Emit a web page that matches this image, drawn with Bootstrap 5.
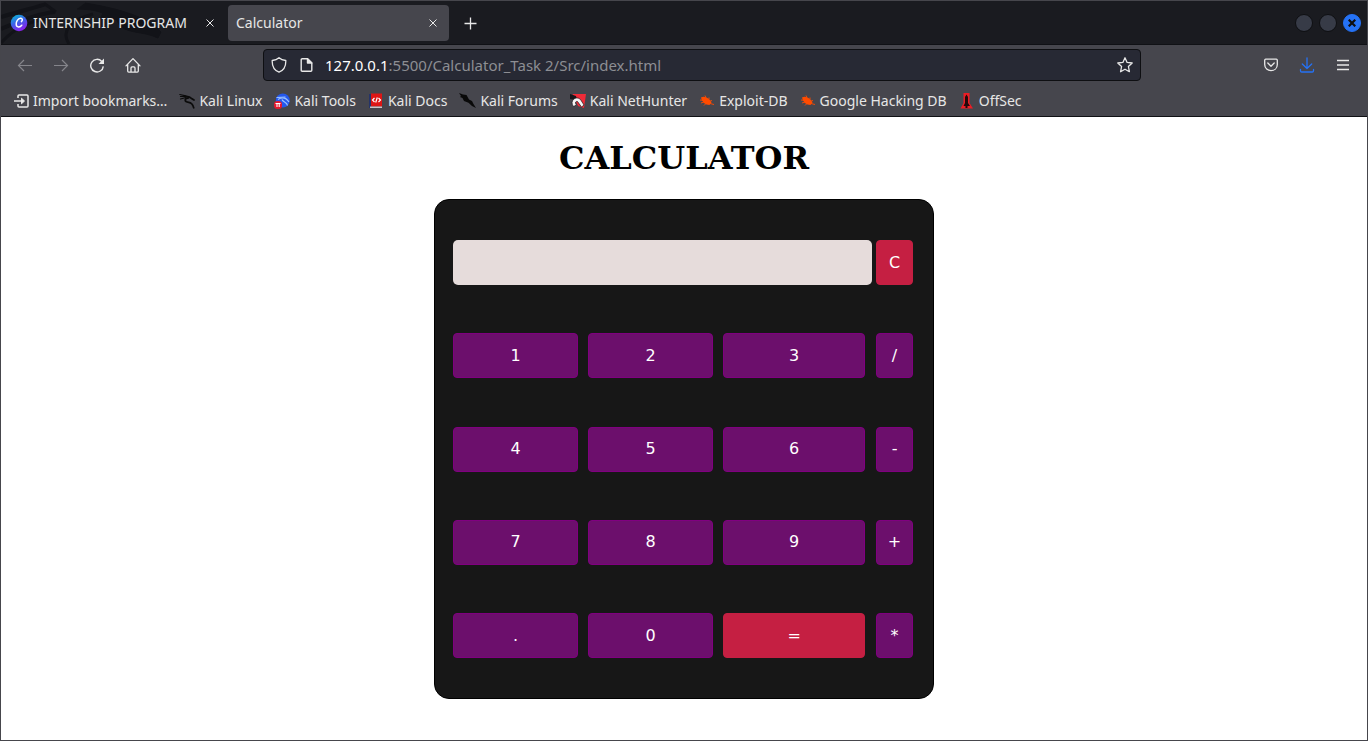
<!DOCTYPE html>
<html lang="en">
<head>
<meta charset="utf-8">
<meta name="viewport" content="width=device-width, initial-scale=1">
<title>Calculator</title>
<link href="https://cdn.jsdelivr.net/npm/bootstrap@5.3.0/dist/css/bootstrap.min.css" rel="stylesheet">
<style>
  body { font-family: "Noto Sans", sans-serif; font-size: 14px; line-height: 20px; }
  .browser { border: 1px solid #46464c; background: #46464d; color: #e6e6e6; }
  .browser svg { display: block; flex: none; }
  .titlebar { position: relative; height: 44px; background: #1a1b20; border-bottom: 1px solid #101115; }
  .dragon { position: absolute; left: 0; top: 0; }
  .icon-btn { border: 0; padding: 0; background: transparent; color: #e8e8e8; display: flex; align-items: center; justify-content: center; }
  .icon-btn:disabled { color: #85858b; }
  .tab { position: relative; width: 221px; height: 36px; padding: 1px 8px 0; border-radius: 4px; color: #e6e6e6; margin-right: 6px; }
  .tab-active { background: #46464d; }
  .tab .icon-btn { width: 16px; height: 16px; }
  .tab-first { padding-right: 4px; }
  .win { width: 18px; height: 18px; border-radius: 50%; background: #373b47; border: 1px solid #0e0f12; }
  .win-group { gap: 6px; margin-right: 6px; }
  .win-close { background: #2572f5; border-color: #2572f5; color: #0e0f12; }
  .toolbar { height: 40px; padding: 0 6px; }
  .tool { width: 36px; height: 32px; }
  .urlbar { flex: 0 1 878px; min-width: 0; height: 32px; margin-left: 36px; background: #272934; border: 1px solid #0e0f12; border-radius: 4px; padding: 0 7px; gap: 11px; }
  .url { color: #8d8e93; text-decoration: none; font-size: 15px; white-space: nowrap; overflow: hidden; }
  .url span { color: #fff; }
  .side { flex: 1 1 0; }
  .bookmarks { height: 32px; padding: 0 12px; gap: 12px; border-bottom: 1px solid #101115; }
  .bookmarks a { color: #e6e6e6; text-decoration: none; display: flex; align-items: center; gap: 4px; white-space: nowrap; }
  .page { background: #fff; color: #000; padding: 21px 16px 41px; }
  .page h1 { font: bold 32px/40px "DejaVu Serif", serif; margin-bottom: 21px; }
  .calculator { width: 500px; max-width: 100%; min-height: 500px; padding: 40px 20px 40px 18px; background: #171717; border: 1px solid #000; border-radius: 15px; }
  .keys { gap: 10px; }
  .keys-top { gap: 4px; }
  .key { flex: 125 1 0; height: 45px; border: 1px solid #800080; border-radius: 4px; background: #6c0f6c; color: #fff; font: 16px/24px "DejaVu Sans", sans-serif; padding: 0; }
  .key-wide { flex-grow: 142; margin-right: 1px; }
  .key-op { flex: 0 0 37px; }
  .key-red { background: #c51f42; border-color: #c51f42; }
  .display-box { flex: 1; min-width: 0; height: 45px; border: 0; border-radius: 5px; background: #e6dcdb; padding: 0 12px; font: 16px/24px "DejaVu Sans", sans-serif; }
</style>
</head>
<body>
<div class="browser min-vh-100 d-flex flex-column">
  <header>
    <div class="titlebar d-flex align-items-center">
      <svg class="dragon" width="170" height="43" viewBox="0 0 170 43" fill="none" stroke="#121318" aria-hidden="true">
        <path d="M0 16C20 10 40 5 45 3M0 28C25 17 42 12 54 11" stroke-width="4"/>
        <path d="M44 3l11 8M68 43c-8-12 0-24 24-30M0 42c14-16 34-26 62-24" stroke-width="3"/>
        <path d="M84 2c36 6 62 14 76 29l-3 6c-15-7-28-4-38-12l-4-7-7 3-1-6-8 3 3-6c-8-3-16-4-26-4" fill="#121318" stroke-width="1"/>
      </svg>
      <div class="tab tab-first d-flex align-items-center">
        <svg class="me-1" width="20" height="18" viewBox="0 0 20 18" aria-hidden="true">
          <defs><linearGradient id="canva" x1="0" y1="0" x2="0.5" y2="1"><stop offset="0" stop-color="#00c8d2"/><stop offset=".5" stop-color="#3a65e8"/><stop offset="1" stop-color="#8a22ee"/></linearGradient></defs>
          <circle cx="10" cy="9" r="8.3" fill="url(#canva)"/>
          <path d="M12.4 7.6c1.600-1.400 1.100-3.500-.9-3.300-2.600.3-4.500 3.400-4.300 6 .2 3.500 4 3.500 5.600.9" fill="none" stroke="#fff" stroke-width="1.500" stroke-linecap="round"/>
        </svg>
        <span class="flex-grow-1 text-nowrap">INTERNSHIP PROGRAM</span>
        <button class="icon-btn" aria-label="Close tab"><svg width="8" height="8" viewBox="0 0 8 8" stroke="currentColor" stroke-width="1"><path d="M.5.5l7 7M7.500.5l-7 7"/></svg></button>
      </div>
      <div class="tab tab-active d-flex align-items-center">
        <span class="flex-grow-1">Calculator</span>
        <button class="icon-btn" aria-label="Close tab"><svg width="8" height="8" viewBox="0 0 8 8" stroke="currentColor" stroke-width="1"><path d="M.5.5l7 7M7.500.5l-7 7"/></svg></button>
      </div>
      <button class="icon-btn ms-2" aria-label="New tab"><svg width="14" height="14" viewBox="0 0 14 14" stroke="currentColor" stroke-width="1.300"><path d="M7.500 1.500v12M1.500 7.500h12"/></svg></button>
      <div class="win-group ms-auto d-flex">
        <button class="icon-btn win" aria-label="Minimize"></button>
        <button class="icon-btn win" aria-label="Maximize"></button>
        <button class="icon-btn win win-close" aria-label="Close"><svg width="8" height="8" viewBox="0 0 8 8" stroke="currentColor" stroke-width="2.200"><path d="M.7.700l6.600 6.600M7.300.700L.7 7.300"/></svg></button>
      </div>
    </div>
    <nav class="toolbar d-flex align-items-center">
      <div class="side d-flex">
        <button class="icon-btn tool" disabled aria-label="Back"><svg width="16" height="16" viewBox="0 0 16 16" fill="none" stroke="currentColor" stroke-width="1.200"><path d="M15 8.500H1.500M7 3L1.500 8.500 7 14"/></svg></button>
        <button class="icon-btn tool" disabled aria-label="Forward"><svg width="16" height="16" viewBox="0 0 16 16" fill="none" stroke="currentColor" stroke-width="1.200"><path d="M1 8.500h13.500M9 3L14.500 8.500 9 14"/></svg></button>
        <button class="icon-btn tool" aria-label="Reload"><svg width="16" height="16" viewBox="0 0 16 16" fill="none" stroke="currentColor" stroke-width="1.400"><path d="M12.800 4.500A6.300 6.300 0 1 0 14.300 9.300"/><path d="M15 1.500V7H9.500z" fill="currentColor" stroke="none"/></svg></button>
        <button class="icon-btn tool" aria-label="Home"><svg width="16" height="16" viewBox="0 0 16 16" fill="none" stroke="currentColor" stroke-width="1.300" stroke-linejoin="round" stroke-linecap="round"><path d="M1 8.900L8 1.600l7 7.300M2.700 7.400v6.700q0 1 1 1h8.600q1 0 1-1V7.400M6 14.900v-4q0-1 1-1h2q1 0 1 1v4"/></svg></button>
      </div>
      <div class="urlbar d-flex align-items-center">
        <svg width="16" height="16" viewBox="0 0 16 16" fill="none" stroke="#e8e8e8" stroke-width="1.300" stroke-linejoin="round" aria-hidden="true"><path d="M8 .8C6.300 2.300 3.800 3.200 1.200 3.500 1 9 3.500 13.500 8 15.200c4.500-1.700 7-6.200 6.800-11.700C12.200 3.200 9.700 2.300 8 .8z"/></svg>
        <svg width="16" height="16" viewBox="0 0 16 16" fill="none" stroke="#e8e8e8" stroke-width="1.400" stroke-linejoin="round" aria-hidden="true"><path d="M4.200 1.700h5.300l4.300 4.300v7.300q0 1-1 1H4.200q-1 0-1-1V2.700q0-1 1-1z"/><path d="M9.500 1.700V6h4.300z" fill="#e8e8e8"/></svg>
        <a class="url flex-grow-1" href="#"><span>127.0.0.1</span>:5500/Calculator_Task 2/Src/index.html</a>
        <button class="icon-btn" aria-label="Bookmark this page"><svg width="16" height="16" viewBox="0 0 16 16" fill="none" stroke="currentColor" stroke-width="1.300" stroke-linejoin="round"><path d="M8 .8l2.100 4.600 5.100.6-3.800 3.500 1 5.200L8 12.200l-4.400 2.500 1-5.200L.8 6l5.100-.6z"/></svg></button>
      </div>
      <div class="side d-flex justify-content-end">
        <button class="icon-btn tool" aria-label="Save to Pocket"><svg width="14" height="14" viewBox="0 0 14 14" fill="none" stroke="currentColor" stroke-width="1.300" stroke-linecap="round" stroke-linejoin="round"><path d="M1.700 1.200h10.600q1 0 1 1V6.500c0 8.200-12.600 8.200-12.600 0V2.200q0-1 1-1z"/><path d="M3.800 5L7 8.200 10.200 5"/></svg></button>
        <button class="icon-btn tool" aria-label="Downloads"><svg width="16" height="16" viewBox="0 0 16 16" fill="none" stroke="#2572f5" stroke-width="1.300" stroke-linecap="round" stroke-linejoin="round"><path d="M8 .8v10.700M3.300 7L8 11.500 12.700 7M1.500 12.500v1.300q0 1.200 1.200 1.200h10.600q1.200 0 1.200-1.200v-1.300"/></svg></button>
        <button class="icon-btn tool" aria-label="Menu"><svg width="12" height="12" viewBox="0 0 12 12" stroke="currentColor" stroke-width="1.300"><path d="M0 1.500h12M0 6h12M0 10.500h12"/></svg></button>
      </div>
    </nav>
    <nav class="bookmarks d-flex align-items-center" aria-label="Bookmarks">
      <a href="#"><svg width="16" height="16" viewBox="0 0 16 16" fill="none" stroke="#e8e8e8" stroke-width="1.500" stroke-linejoin="round"><path d="M5 5V3q0-1 1-1h8q1 0 1 1v10q0 1-1 1H6q-1 0-1-1v-2M1 8h9"/><path d="M8.500 5.200L11.500 8l-3 2.800z" fill="#e8e8e8" stroke-width="1"/></svg>Import bookmarks…</a>
      <a href="#"><svg width="16" height="16" viewBox="0 0 16 16" fill="none" stroke="#0b0b0b" stroke-linecap="round"><path d="M.8 1.500l6 1.300M1.500 3.500L7 3.300M1.500 6L7 4.500" stroke-width="1.200"/><path d="M6 3.500c3-.6 5 .2 7 2.300l2 1.200M9.500 4.800c-4.500.7-4.300 4 .2 4.500 3 .3 4 1.700 5 5.500" stroke-width="1.700"/></svg>Kali Linux</a>
      <a href="#"><svg width="16" height="16" viewBox="0 0 16 16"><circle cx="8.800" cy="7.500" r="7" fill="#2458ee"/><path d="M2.500 4.500l9-.3M4 6.500C8 4 12 4.500 15 9M8 6.500c1 3 5 2 5.500 6" fill="none" stroke="#9dc3ff" stroke-width="1.200"/><rect y="8" width="8" height="8" rx="3.500" fill="#e5182e"/><path d="M1.500 10.500h5M3 10.500v3.500M5.200 10.500v3.500" stroke="#fff" stroke-width="1.100"/></svg>Kali Tools</a>
      <a href="#"><svg width="16" height="16" viewBox="0 0 16 16"><path d="M1 1h2.500v14H1z" fill="#253469"/><path d="M3 .5h11v13H3z" fill="#de1515"/><path d="M2 13.500h12V15H2z" fill="#c9c4c8"/><path d="M6.500 5L4.500 7l2 2M10.500 5l2 2-2 2M9.300 4.500L7.700 9.500" fill="none" stroke="#fff" stroke-width="1.200"/></svg>Kali Docs</a>
      <a href="#"><svg width="17" height="16" viewBox="0 0 17 16"><path d="M0 0l4 1.500L7.500 2l2.500 4.500 3 1.500 1.500 3 2.500 4-4-2-3.500-3.300-4.500-1.700L3.500 5 1 4l1-1z" fill="#090909"/></svg>Kali Forums</a>
      <a href="#"><svg width="16" height="16" viewBox="0 0 16 16"><path d="M2.500 1H16l-2 14-6-2z" fill="#f02b38"/><path d="M0 1l6 2 1 4-7-1z" fill="#17151a"/><path d="M3.500 13.500C-1 8 6 2 10.500 6.500l3.500 5.500-2.500 2-4-5.500c-2.500-.5-2.500 2-1 3.500z" fill="#f5f5f5" stroke="#19171a" stroke-width=".7"/></svg>Kali NetHunter</a>
      <a href="#"><svg width="16" height="16" viewBox="0 0 16 16"><path d="M2 4.500C5 2.500 10 4.500 12.500 9.500L10.500 12C6 12 3 9 2 4.500z" fill="#ff4b00"/><path d="M1 7l3 .3M2 10l3-1M5 12.500l2-2M6 2.500l1 2.500M10 4.500v2M13 7.500l-3 1M15 11.500l-4-1" stroke="#ff4b00" stroke-width=".9"/></svg>Exploit-DB</a>
      <a href="#"><svg width="16" height="16" viewBox="0 0 16 16"><path d="M2 4.500C5 2.500 10 4.500 12.500 9.500L10.500 12C6 12 3 9 2 4.500z" fill="#ff4b00"/><path d="M1 7l3 .3M2 10l3-1M5 12.500l2-2M6 2.500l1 2.500M10 4.500v2M13 7.500l-3 1M15 11.500l-4-1" stroke="#ff4b00" stroke-width=".9"/></svg>Google Hacking DB</a>
      <a href="#"><svg width="16" height="16" viewBox="0 0 16 16"><path d="M4.500 0h6v10l3.500 5.500H1.500L4.500 10z" fill="#ed1c24"/><path d="M7.500 1.500L9 4v6l2 3H8.500v2h-2v-2H4.500l1.500-3V4z" fill="#23090b"/></svg>OffSec</a>
    </nav>
  </header>
  <main class="page flex-grow-1 d-flex flex-column align-items-center">
    <h1>CALCULATOR</h1>
    <div class="calculator d-flex flex-column justify-content-between">
      <div class="d-flex keys-top"><input class="display-box" type="text" aria-label="Display"><button class="key key-op key-red">C</button></div>
      <div class="d-flex keys"><button class="key">1</button><button class="key">2</button><button class="key key-wide">3</button><button class="key key-op">/</button></div>
      <div class="d-flex keys"><button class="key">4</button><button class="key">5</button><button class="key key-wide">6</button><button class="key key-op">-</button></div>
      <div class="d-flex keys"><button class="key">7</button><button class="key">8</button><button class="key key-wide">9</button><button class="key key-op">+</button></div>
      <div class="d-flex keys"><button class="key">.</button><button class="key">0</button><button class="key key-wide key-red">=</button><button class="key key-op">*</button></div>
    </div>
  </main>
</div>
<script src="https://cdn.jsdelivr.net/npm/bootstrap@5.3.0/dist/js/bootstrap.bundle.min.js"></script>
</body>
</html>
